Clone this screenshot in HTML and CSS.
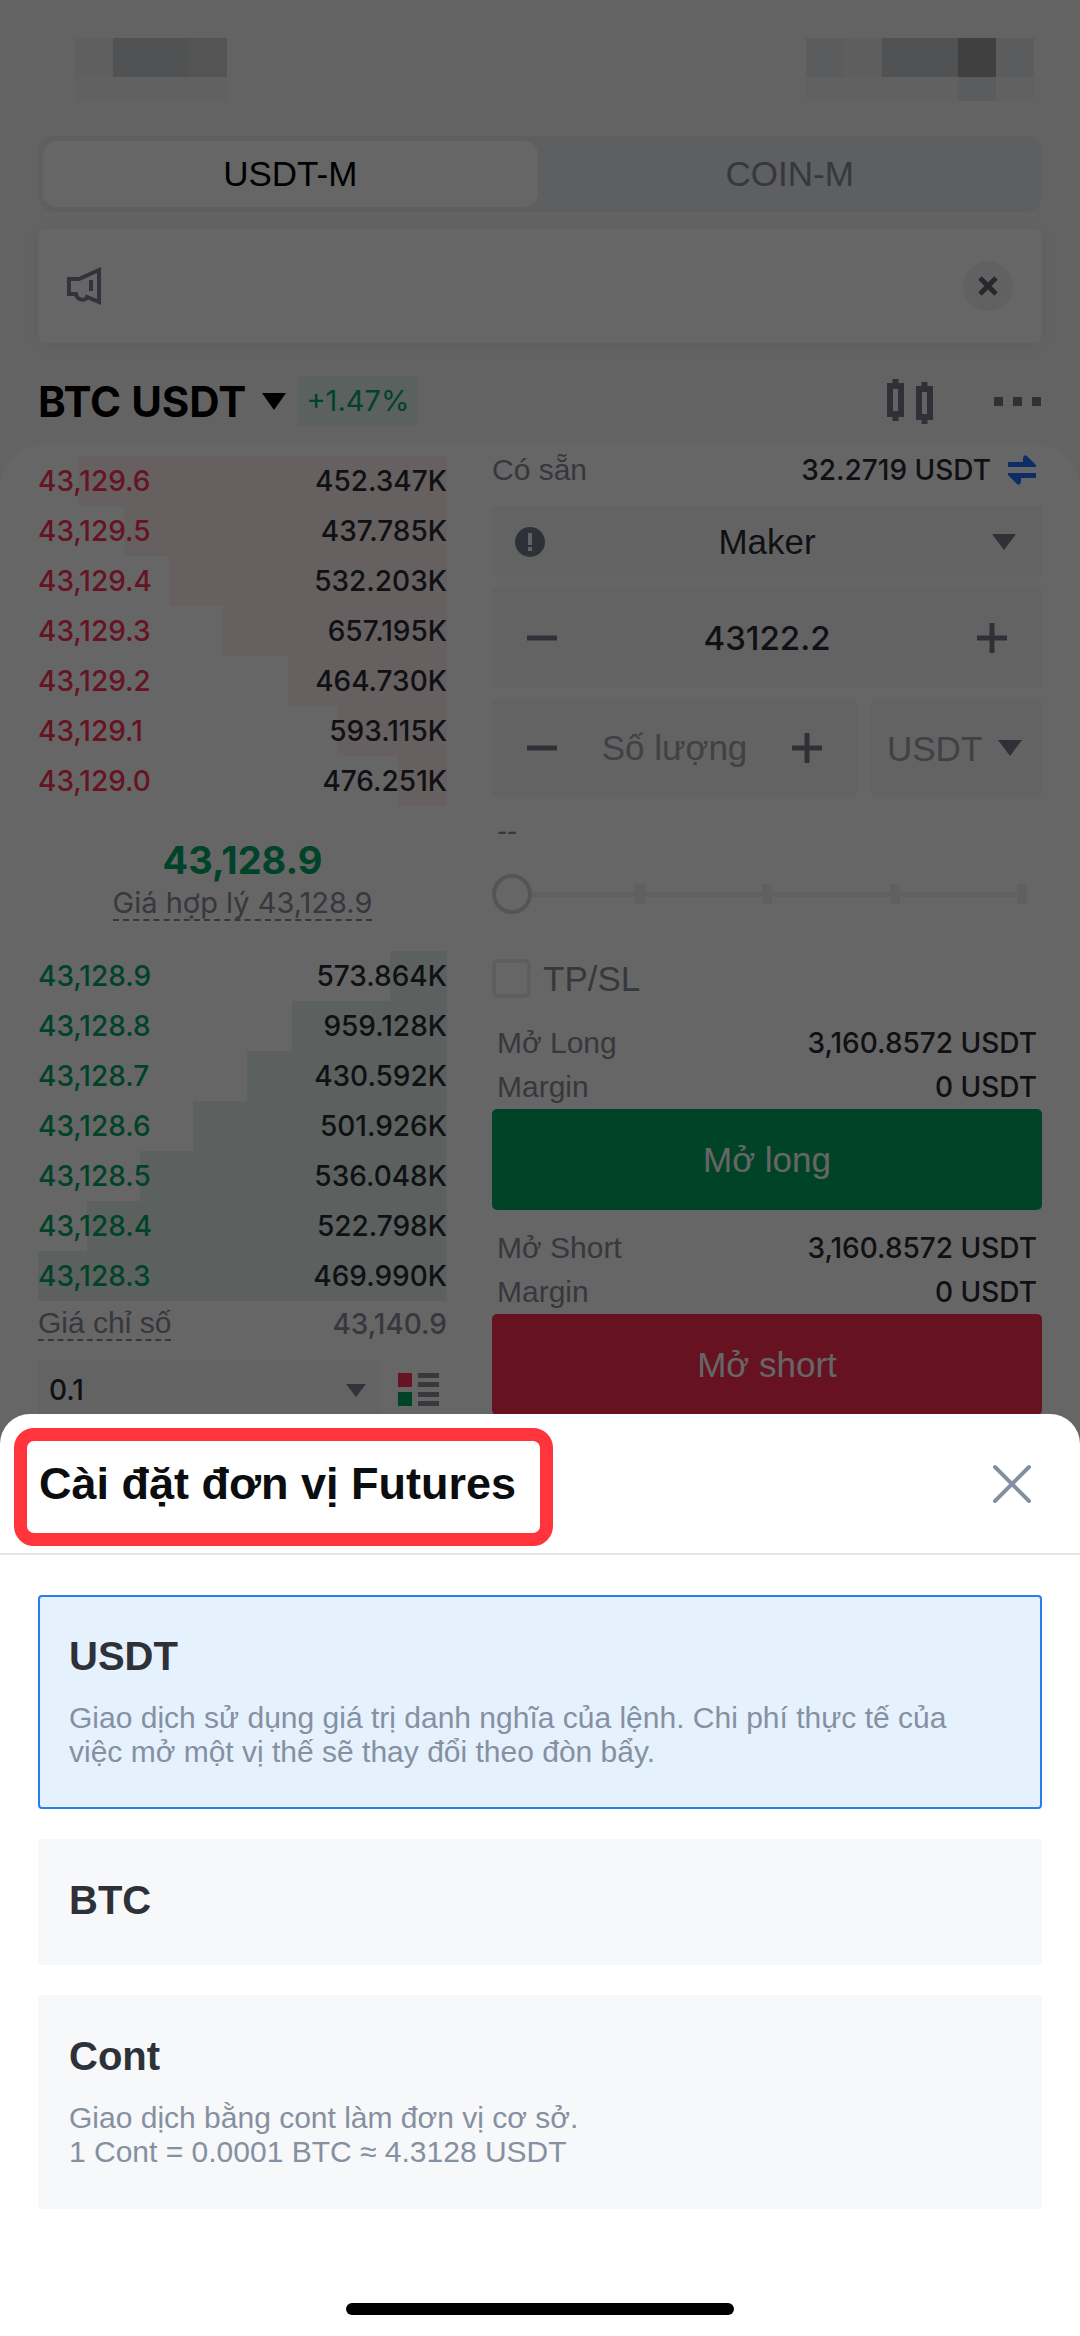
FILE: index.html
```
<!DOCTYPE html>
<html lang="vi">
<head>
    <meta charset="UTF-8">
    <meta name="viewport" content="width=device-width, initial-scale=1.0">
    <title>Futures BTC USDT</title>
    <link rel="stylesheet" href="styles.css">
</head>
<body>
    <main class="screen">
        <div class="status-bar">
            <div class="mosaic">
                <i class="c1"></i><i class="c4"></i><i class="c4"></i><i class="c5"></i>
                <i class="c0"></i><i class="c0"></i><i class="c0"></i><i class="c0"></i>
            </div>
            <div class="mosaic mosaic-right">
                <i class="c3"></i><i class="c2"></i><i class="c4"></i><i class="c4"></i><i class="c6"></i><i class="c3"></i>
                <i class="c0"></i><i class="c0"></i><i class="c0"></i><i class="c0"></i><i class="c3"></i><i class="c0"></i>
            </div>
        </div>

        <nav class="tabs">
            <button type="button" class="tab active">USDT-M</button>
            <button type="button" class="tab">COIN-M</button>
        </nav>

        <div class="notice">
            <svg width="36" height="38" viewBox="0 0 36 38" fill="none" stroke="#7c8291" stroke-width="4">
                <path d="M2 12H12L32 3V35L20 30C19 34 10 34 9 27H2Z"/>
                <path d="M24 13V24"/>
            </svg>
            <button type="button" class="notice-close" aria-label="Đóng thông báo">
                <svg width="20" height="20" viewBox="0 0 20 20" stroke="#5f6570" stroke-width="5"><path d="M2 2L18 18M18 2L2 18"/></svg>
            </button>
        </div>

        <header class="pair">
            <h1>BTC USDT</h1>
            <svg width="24" height="17" viewBox="0 0 24 17"><path d="M0 0H24L12 17Z" fill="#000"/></svg>
            <span class="change">+1.47%</span>
            <button type="button" class="icon-button" aria-label="Biểu đồ">
                <svg width="48" height="48" viewBox="0 0 48 48" fill="none" stroke="#767b89" stroke-width="6">
                    <path d="M4 9H15V37H4ZM9.500 2V8M9.500 38V44M33 12H44V40H33ZM38.500 5V11M38.500 41V47"/>
                </svg>
            </button>
            <button type="button" class="icon-button" aria-label="Thêm">
                <svg width="48" height="10" viewBox="0 0 48 10" fill="#767b89"><path d="M0 1H9V10H0ZM19 1H28V10H19ZM38 1H47V10H38Z"/></svg>
            </button>
        </header>

        <div class="panel">
            <section class="book">
                <table class="asks" aria-label="Lệnh bán">
                    <tr style="--depth: 90%"><td>43,129.6</td><td>452.347K</td></tr>
                    <tr style="--depth: 79%"><td>43,129.5</td><td>437.785K</td></tr>
                    <tr style="--depth: 68%"><td>43,129.4</td><td>532.203K</td></tr>
                    <tr style="--depth: 55%"><td>43,129.3</td><td>657.195K</td></tr>
                    <tr style="--depth: 39%"><td>43,129.2</td><td>464.730K</td></tr>
                    <tr style="--depth: 27%"><td>43,129.1</td><td>593.115K</td></tr>
                    <tr style="--depth: 12%"><td>43,129.0</td><td>476.251K</td></tr>
                </table>
                <div class="mark">
                    <strong>43,128.9</strong>
                    <span class="dashed">Giá hợp lý 43,128.9</span>
                </div>
                <table class="bids" aria-label="Lệnh mua">
                    <tr style="--depth: 14%"><td>43,128.9</td><td>573.864K</td></tr>
                    <tr style="--depth: 38%"><td>43,128.8</td><td>959.128K</td></tr>
                    <tr style="--depth: 49%"><td>43,128.7</td><td>430.592K</td></tr>
                    <tr style="--depth: 62%"><td>43,128.6</td><td>501.926K</td></tr>
                    <tr style="--depth: 75%"><td>43,128.5</td><td>536.048K</td></tr>
                    <tr style="--depth: 88%"><td>43,128.4</td><td>522.798K</td></tr>
                    <tr style="--depth: 100%"><td>43,128.3</td><td>469.990K</td></tr>
                </table>
                <div class="index-price">
                    <span class="dashed">Giá chỉ số</span>
                    <span class="number">43,140.9</span>
                </div>
                <div class="book-tools">
                    <div class="select-box">
                        <select aria-label="Bước giá"><option>0.1</option></select>
                        <svg class="arrow" width="20" height="13" viewBox="0 0 20 13"><path d="M0 0H20L10 13Z" fill="#7c8291"/></svg>
                    </div>
                    <button type="button" class="icon-button" aria-label="Kiểu sổ lệnh">
                        <svg width="41" height="34" viewBox="0 0 41 34">
                            <path d="M0 0H14V14H0Z" fill="#ff3358"/>
                            <path d="M0 19H14V33H0Z" fill="#00a868"/>
                            <path d="M20 0H41V5H20ZM20 9H41V14H20ZM20 19H41V24H20ZM20 28H41V33H20Z" fill="#8c8f98"/>
                        </svg>
                    </button>
                </div>
            </section>

            <form class="order">
                <div class="row available">
                    <span class="muted">Có sẵn</span>
                    <span class="number">32.2719 USDT</span>
                    <svg width="30" height="30" viewBox="0 0 30 30" fill="#2070ff">
                        <path d="M1 7H16V3Q17 -1 20 1L29 10V12H1ZM29 23H14V27Q13 31 10 29L1 20V18H29Z"/>
                    </svg>
                </div>

                <div class="select-box order-type">
                    <select aria-label="Loại lệnh"><option>Maker</option></select>
                    <svg class="info" width="30" height="30" viewBox="0 0 30 30">
                        <circle cx="15" cy="15" r="15" fill="#767b8f"/>
                        <path d="M13 6H17V18H13ZM13 20H17V24H13Z" fill="#f7f7fb"/>
                    </svg>
                    <svg class="arrow" width="24" height="16" viewBox="0 0 24 16"><path d="M0 0H24L12 16Z" fill="#767b8a"/></svg>
                </div>

                <div class="stepper price">
                    <button type="button" aria-label="Giảm giá"><svg width="30" height="30" viewBox="0 0 30 30"><path d="M0 15H30" stroke="#767b8a" stroke-width="5"/></svg></button>
                    <input type="text" value="43122.2" aria-label="Giá">
                    <button type="button" aria-label="Tăng giá"><svg width="30" height="30" viewBox="0 0 30 30"><path d="M0 15H30M15 0V30" stroke="#767b8a" stroke-width="5"/></svg></button>
                </div>

                <div class="quantity">
                    <div class="stepper">
                        <button type="button" aria-label="Giảm số lượng"><svg width="30" height="30" viewBox="0 0 30 30"><path d="M0 15H30" stroke="#767b8a" stroke-width="5"/></svg></button>
                        <input type="text" placeholder="Số lượng" aria-label="Số lượng">
                        <button type="button" aria-label="Tăng số lượng"><svg width="30" height="30" viewBox="0 0 30 30"><path d="M0 15H30M15 0V30" stroke="#767b8a" stroke-width="5"/></svg></button>
                    </div>
                    <div class="select-box unit">
                        <select aria-label="Đơn vị"><option>USDT</option></select>
                        <svg class="arrow" width="24" height="16" viewBox="0 0 24 16"><path d="M0 0H24L12 16Z" fill="#767b8a"/></svg>
                    </div>
                </div>

                <div class="estimate">--</div>
                <input type="range" class="slider" min="0" max="100" value="0" aria-label="Tỷ lệ">

                <label class="tpsl"><input type="checkbox"> TP/SL</label>

                <div class="row"><span class="muted">Mở Long</span><span class="number">3,160.8572 USDT</span></div>
                <div class="row"><span class="muted">Margin</span><span class="number">0 USDT</span></div>
                <button type="button" class="submit long">Mở long</button>

                <div class="row"><span class="muted">Mở Short</span><span class="number">3,160.8572 USDT</span></div>
                <div class="row"><span class="muted">Margin</span><span class="number">0 USDT</span></div>
                <button type="button" class="submit short">Mở short</button>
            </form>
        </div>
    </main>

    <div class="overlay">
        <section class="sheet" role="dialog" aria-labelledby="sheetTitle">
            <header class="sheet-header">
                <h2 id="sheetTitle">Cài đặt đơn vị Futures</h2>
                <button type="button" class="icon-button" aria-label="Đóng">
                    <svg width="40" height="40" viewBox="0 0 40 40" stroke="#8490a2" stroke-width="4" stroke-linecap="round"><path d="M3 3L37 37M37 3L3 37"/></svg>
                </button>
            </header>
            <div class="options">
                <label class="option">
                    <input type="radio" name="unit" value="usdt" checked>
                    <span class="option-title">USDT</span>
                    <span class="option-text">Giao dịch sử dụng giá trị danh nghĩa của lệnh. Chi phí thực tế của việc mở một vị thế sẽ thay đổi theo đòn bẩy.</span>
                </label>
                <label class="option">
                    <input type="radio" name="unit" value="btc">
                    <span class="option-title">BTC</span>
                </label>
                <label class="option">
                    <input type="radio" name="unit" value="cont">
                    <span class="option-title">Cont</span>
                    <span class="option-text">Giao dịch bằng cont làm đơn vị cơ sở.<br>1 Cont = 0.0001 BTC ≈ 4.3128 USDT</span>
                </label>
            </div>
            <div class="home-bar"></div>
        </section>
    </div>
</body>
</html>
```
FILE: styles.css
```
* {
    box-sizing: border-box;
}

body {
    margin: 0;
    font-family: "Liberation Sans", Arial, sans-serif;
    font-size: 30px;
    color: #2a2c32;
    background-color: #f7f7fa;
}

button,
input,
select {
    margin: 0;
    padding: 0;
    border: none;
    background: none;
    color: inherit;
    font: inherit;
}

select {
    appearance: none;
}

svg {
    display: block;
    flex: none;
}

.screen {
    height: 100vh;
    overflow: hidden;
}

.number {
    font-family: Inter, sans-serif;
    font-size: 28px;
    font-weight: 500;
}

.muted {
    color: #8a8d98;
}

.icon-button {
    flex: none;
}

/* status bar */
.status-bar {
    display: flex;
    justify-content: space-between;
    padding: 38px 46px 35px 75px;
}

.mosaic {
    display: grid;
    grid-template-columns: repeat(4, 38px);
    grid-template-rows: 39px 24px;
}

.mosaic-right {
    grid-template-columns: repeat(6, 38px);
}

.c0 { background-color: #f3f3f5; }
.c1 { background-color: #ededf0; }
.c2 { background-color: #ebebed; }
.c3 { background-color: #e3e6e8; }
.c4 { background-color: #cbcccf; }
.c5 { background-color: #d2d2d1; }
.c6 { background-color: #a0a0a0; }

/* tabs */
.tabs {
    display: flex;
    gap: 5px;
    margin: 0 38px;
    padding: 5px;
    border-radius: 16px;
    background-color: #e9edf0;
}

.tab {
    flex: 1;
    border-radius: 14px;
    font-size: 35px;
    line-height: 66px;
    color: #8a8d98;
}

.tab.active {
    background-color: #fff;
    color: #000;
}

.notice {
    display: flex;
    justify-content: space-between;
    align-items: center;
    margin: 17px 38px 33px;
    padding: 32px 29px;
    border-radius: 8px;
    background-color: #fff;
    box-shadow: 0 2px 16px rgba(0, 0, 20, 0.06);
}

.notice-close {
    display: grid;
    place-items: center;
    width: 50px;
    height: 50px;
    border-radius: 50%;
    background-color: #f3f3f6;
}

/* pair */
.pair {
    display: flex;
    align-items: center;
    padding: 0 38px;
    height: 50px;
}

.pair h1 {
    margin: 0 16px 0 0;
    font-family: Inter, sans-serif;
    font-size: 42px;
    font-weight: 700;
    color: #000;
}

.change {
    margin: 0 auto 0 12px;
    padding: 0 8px;
    font-family: Inter, sans-serif;
    font-size: 29px;
    line-height: 50px;
    color: #00a868;
    background-color: #e2f2eb;
}

.pair .icon-button + .icon-button {
    margin-left: 60px;
}

/* main panel */
.panel {
    display: grid;
    grid-template-columns: 409fr 550fr;
    column-gap: 45px;
    margin-top: 18px;
    padding: 8px 38px;
    border-radius: 44px 44px 0 0;
    background-color: #fff;
}

.book {
    padding-top: 4px;
}

.book table {
    width: 100%;
    border-collapse: collapse;
    font-family: Inter, sans-serif;
    font-size: 28px;
    font-weight: 500;
    line-height: 50px;
}

.book td {
    padding: 0;
}

.book td:last-child {
    text-align: right;
}

.book tr {
    background: linear-gradient(var(--bar), var(--bar)) right / var(--depth) 100% no-repeat;
}

.asks { --bar: #ffefef; }
.bids { --bar: #e7f2ed; }
.asks td:first-child { color: #ff3358; }
.bids td:first-child { color: #00a868; }

.mark {
    display: flex;
    flex-direction: column;
    align-items: center;
    padding: 32px 0 30px;
    font-family: Inter, sans-serif;
    font-size: 29px;
    color: #8a8d98;
}

.mark strong {
    margin-bottom: 5px;
    font-size: 38px;
    line-height: 44px;
    color: #00a868;
}

.dashed {
    line-height: 32px;
    border-bottom: 2px dashed #8a8d98;
}

.index-price {
    display: flex;
    justify-content: space-between;
    align-items: center;
    margin: 6px 0 20px;
    color: #8a8d98;
}

.book-tools {
    display: flex;
    align-items: center;
    gap: 18px;
    padding-right: 8px;
}

.book-tools .select-box {
    flex: 1;
    height: 58px;
    font-family: Inter, sans-serif;
    font-size: 28px;
    font-weight: 500;
}

/* boxes share one cell: the control and the icons over it */
.select-box {
    display: grid;
    border-radius: 4px;
    background-color: #f7f7fb;
}

.select-box > * {
    grid-area: 1 / 1;
}

.select-box select {
    padding-left: 11px;
}

.arrow,
.info {
    align-self: center;
    pointer-events: none;
}

.arrow {
    justify-self: end;
    margin-right: 14px;
}

.info {
    margin-left: 23px;
}

/* order form */
.order {
    display: flex;
    flex-direction: column;
}

.row {
    display: flex;
    justify-content: space-between;
    align-items: center;
    padding: 0 5px;
    line-height: 44px;
}

.available {
    margin-bottom: 18px;
    padding: 0 5px 0 0;
    line-height: 36px;
}

.available .number {
    margin: 0 16px 0 auto;
}

.order-type {
    height: 71px;
    font-size: 35px;
}

.order-type select {
    padding: 0;
    text-align-last: center;
}

.order-type .arrow {
    margin-right: 26px;
}

.stepper {
    display: flex;
    flex: 1;
    align-items: center;
    justify-content: space-between;
    min-width: 0;
    height: 98px;
    padding: 0 35px;
    border-radius: 4px;
    background-color: #f7f7fb;
}

.stepper input {
    width: 100%;
    min-width: 0;
    text-align: center;
}

.price {
    flex: none;
    height: 101px;
    margin: 10px 0 11px;
    font-family: Inter, sans-serif;
    font-size: 33px;
    font-weight: 500;
}

.quantity {
    display: flex;
    gap: 14px;
    font-size: 35px;
}

.quantity input::placeholder {
    color: #a0a2aa;
    opacity: 1;
}

.unit {
    width: 171px;
}

.unit select {
    padding-left: 16px;
    color: #a0a2aa;
}

.unit .arrow {
    margin-right: 20px;
}

.estimate {
    margin: 17px 5px 26px;
    line-height: 34px;
    color: #8a8d98;
}

.slider {
    appearance: none;
    width: 100%;
    height: 40px;
    padding: 0 15px;
    background:
        linear-gradient(#f0f0f4, #f0f0f4) 0 50% / 10px 20px,
        linear-gradient(#f0f0f4, #f0f0f4) 25% 50% / 10px 20px,
        linear-gradient(#f0f0f4, #f0f0f4) 50% 50% / 10px 20px,
        linear-gradient(#f0f0f4, #f0f0f4) 75% 50% / 10px 20px,
        linear-gradient(#f0f0f4, #f0f0f4) 100% 50% / 10px 20px,
        linear-gradient(#f0f0f4, #f0f0f4) 50% 50% / 100% 5px;
    background-origin: content-box;
    background-repeat: no-repeat;
}

.slider::-webkit-slider-runnable-track {
    margin: 0 -15px;
}

.slider::-webkit-slider-thumb {
    appearance: none;
    width: 40px;
    height: 40px;
    border: 4px solid #d4d4da;
    border-radius: 50%;
    background-color: #fff;
}

.tpsl {
    display: flex;
    align-items: center;
    gap: 12px;
    margin: 45px 0 23px;
    font-size: 35px;
    line-height: 39px;
    color: #8a8d98;
}

.tpsl input {
    appearance: none;
    width: 39px;
    height: 39px;
    border: 4px solid #ececf1;
    border-radius: 6px;
}

.submit {
    margin-bottom: 16px;
    border-radius: 5px;
    font-size: 35px;
    line-height: 101px;
    color: #fff;
}

.long {
    background-color: #00a85f;
}

.short {
    background-color: #ff2d52;
}

/* bottom sheet */
.overlay {
    position: fixed;
    inset: 0;
    display: flex;
    align-items: flex-end;
    background-color: rgba(0, 0, 0, 0.6);
}

.sheet {
    width: 100%;
    border-radius: 30px 30px 0 0;
    background-color: #fff;
}

.sheet-header {
    display: flex;
    justify-content: space-between;
    align-items: center;
    padding: 14px 48px 7px 14px;
    border-bottom: 2px solid #e6e6e8;
}

.sheet-header h2 {
    margin: 0;
    padding: 17px 24px 23px 12px;
    border: 13px solid #ff353b;
    border-radius: 20px;
    font-size: 45px;
    line-height: 52px;
    color: #0c0d0f;
}

.sheet-header .icon-button {
    padding-bottom: 6px;
}

.options {
    display: flex;
    flex-direction: column;
    gap: 30px;
    padding: 40px 38px 94px;
}

.option {
    display: flex;
    flex-direction: column;
    gap: 22px;
    padding: 36px 60px 40px 29px;
    border: 2px solid #f7f8fa;
    border-radius: 4px;
    background-color: #f7f8fa;
}

.option:has(input:checked) {
    padding-bottom: 38px;
    border-color: #2b7cee;
    background-color: #e6f1fe;
}

.option:last-child {
    padding-bottom: 38px;
}

.option input {
    position: absolute;
    opacity: 0;
}

.option-title {
    font-size: 40px;
    font-weight: 700;
    line-height: 46px;
    color: #2e3138;
}

.option-text {
    line-height: 34px;
    color: #8590a1;
}

.home-bar {
    width: 36%;
    height: 12px;
    margin: 0 auto 21px;
    border-radius: 6px;
    background-color: #000;
}
```
